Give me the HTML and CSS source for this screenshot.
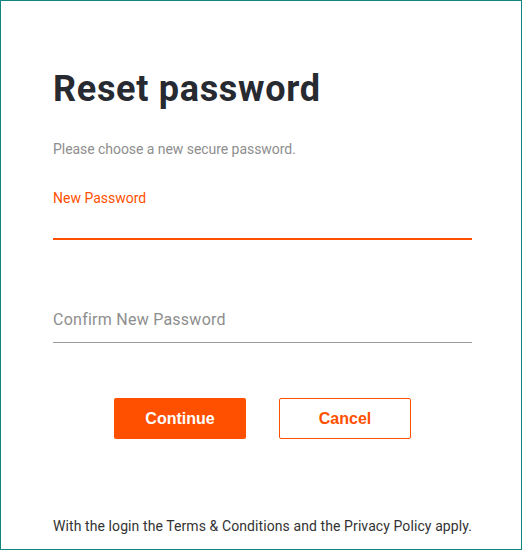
FILE: index.html
```html
<!DOCTYPE html>
<html lang="en">
<head>
    <meta charset="UTF-8">
    <meta name="viewport" content="width=device-width, initial-scale=1.0">
    <title>Reset password</title>
    <link rel="stylesheet" href="styles.css">
</head>
<body>
    <div class="page">
        <h1>Reset password</h1>
        <p class="intro">Please choose a new secure password.</p>

        <form id="resetForm">
            <div class="field">
                <label for="newPassword">New Password</label>
                <input type="password" id="newPassword" class="active">
            </div>
            <div class="field confirm">
                <input type="password" id="confirmPassword" placeholder="Confirm New Password">
            </div>
            <div class="actions">
                <button type="submit" class="btn primary">Continue</button>
                <button type="button" class="btn secondary">Cancel</button>
            </div>
        </form>

        <p class="legal">With the login the Terms &amp; Conditions and the Privacy Policy apply.</p>
    </div>
</body>
</html>
```

FILE: styles.css
```css
* {
    box-sizing: border-box;
}
html, body {
    margin: 0;
    height: 100%;
}
body {
    font-family: Roboto, Arial, sans-serif;
    color: #333;
    background: #fff;
    border: 1px solid #0e8580;
}
.page {
    display: flex;
    flex-direction: column;
    height: 100%;
    padding: 66px 49px 13px 52px;
}
h1 {
    margin: 0;
    font-size: 36px;
    line-height: 44px;
    font-weight: 700;
    letter-spacing: 0.7px;
    color: #272a30;
}
.intro {
    margin: 28px 0 0;
    font-size: 14px;
    line-height: 20px;
    letter-spacing: -0.05px;
    color: #8e8e8e;
}
.field {
    margin-top: 29px;
}
.field label {
    display: block;
    font-size: 14px;
    line-height: 20px;
    color: #ff5000;
}
.field input {
    display: block;
    width: 100%;
    border: none;
    border-bottom: 1px solid #999;
    font-family: inherit;
    font-size: 16px;
    letter-spacing: 0.25px;
    color: #333;
    outline: none;
    padding: 0;
    background: transparent;
}
.field input.active {
    height: 32px;
    border-bottom: 2px solid #ff5000;
}
.field.confirm {
    margin-top: 64px;
}
.field.confirm input {
    height: 39px;
    padding-bottom: 7px;
}
.field input::placeholder {
    color: #8e8e8e;
}
.actions {
    display: flex;
    justify-content: center;
    gap: 33px;
    margin-top: 55px;
}
.btn {
    width: 132px;
    height: 41px;
    border-radius: 2px;
    font-family: "Liberation Sans", Arial, sans-serif;
    font-size: 16px;
    font-weight: 700;
    cursor: pointer;
}
.primary {
    background-color: #ff5000;
    border: none;
    color: #fff;
}
.secondary {
    background-color: #fff;
    border: 1px solid #ff5000;
    color: #ff5000;
}
.legal {
    margin: auto 0 0;
    font-size: 14px;
    line-height: 20px;
    letter-spacing: 0.09px;
    color: #333;
}
```
